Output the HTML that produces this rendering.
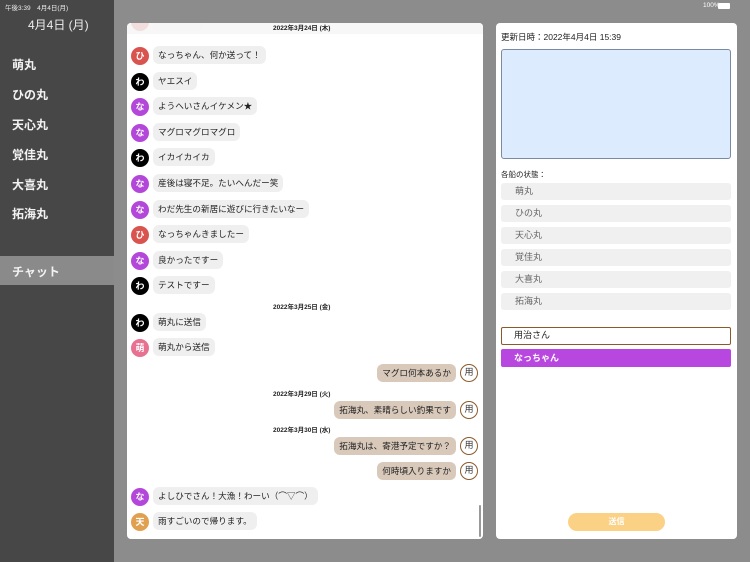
<!DOCTYPE html>
<html><head><meta charset="utf-8"><style>
*{margin:0;padding:0;box-sizing:border-box}
body{width:750px;height:562px;background:#8c8c8c;font-family:"Liberation Sans","Noto Sans CJK JP",sans-serif;position:relative;overflow:hidden}
.a{position:absolute}
.side{left:0;top:0;width:114px;height:562px;background:#474747}
.nav{left:12px;color:#f2f2f2;font-size:12px;font-weight:bold}
.chat{left:127px;top:23px;width:356px;height:516px;background:#fff;border-radius:4px;overflow:hidden}
.av{width:18px;height:18px;border-radius:50%;color:#fff;font-size:9px;font-weight:bold;text-align:center;line-height:18px}
.bl{height:18px;line-height:18px;background:#efefef;border-radius:6px;font-size:8.6px;color:#222;padding:0 5px;white-space:nowrap}
.br{background:#d9c9ba}
.ua{width:18px;height:18px;border-radius:50%;border:1.5px solid #8b5a2b;background:#fff;color:#333;font-size:9px;text-align:center;line-height:15px}
.dt{font-size:6.5px;font-weight:bold;color:#222;line-height:8px}
.right{left:496px;top:23px;width:241px;height:516px;background:#fff;border-radius:4px}
.st{left:5px;width:230px;height:17px;background:#f0f0f0;border-radius:3px;font-size:9px;color:#666;line-height:17px;padding-left:14px}
</style></head><body>
<div class="a side"></div>
<div class="a" style="left:5px;top:2px;font-size:6.5px;color:#eee">午後3:39　4月4日(月)</div>
<div class="a" style="left:28px;top:16px;font-size:12px;color:#eee">4月4日 (月)</div>
<div class="a nav" style="top:56px">萌丸</div>
<div class="a nav" style="top:86px">ひの丸</div>
<div class="a nav" style="top:116px">天心丸</div>
<div class="a nav" style="top:146px">覚佳丸</div>
<div class="a nav" style="top:176px">大喜丸</div>
<div class="a nav" style="top:205px">拓海丸</div>
<div class="a" style="left:0;top:256px;width:114px;height:29px;background:#8a8a8a"></div>
<div class="a nav" style="top:263px">チャット</div>
<div class="a" style="left:703px;top:2px;font-size:6.5px;color:#fff">100%</div>
<div class="a" style="left:718px;top:3px;width:12px;height:6px;background:#fff;border-radius:1px"></div>

<div class="a chat">
<div class="a" style="left:0;top:0;width:356px;height:11px;background:#f7f7f7"></div>
<div class="a dt" style="left:146px;top:2px">2022年3月24日 (木)</div>
<div class="a av" style="left:4px;top:-10px;background:#d9534f"></div>
<div class="a bl" style="left:26px;top:-10px;width:50px"></div>
<div class="a" style="left:0;top:0;width:356px;height:11px;background:#f7f7f7;opacity:.85"></div>
<div class="a dt" style="left:146px;top:2px">2022年3月24日 (木)</div>
<div class="a av" style="left:4px;top:24px;background:#d9534f">ひ</div><div class="a bl" style="left:26px;top:23px">なっちゃん、何か送って！</div>
<div class="a av" style="left:4px;top:50px;background:#000">わ</div><div class="a bl" style="left:26px;top:49px">ヤエスイ</div>
<div class="a av" style="left:4px;top:75px;background:#b347d9">な</div><div class="a bl" style="left:26px;top:74px">ようへいさんイケメン★</div>
<div class="a av" style="left:4px;top:101px;background:#b347d9">な</div><div class="a bl" style="left:26px;top:100px">マグロマグロマグロ</div>
<div class="a av" style="left:4px;top:126px;background:#000">わ</div><div class="a bl" style="left:26px;top:125px">イカイカイカ</div>
<div class="a av" style="left:4px;top:152px;background:#b347d9">な</div><div class="a bl" style="left:26px;top:151px">産後は寝不足。たいへんだー笑</div>
<div class="a av" style="left:4px;top:178px;background:#b347d9">な</div><div class="a bl" style="left:26px;top:177px">わだ先生の新居に遊びに行きたいなー</div>
<div class="a av" style="left:4px;top:203px;background:#d9534f">ひ</div><div class="a bl" style="left:26px;top:202px">なっちゃんきましたー</div>
<div class="a av" style="left:4px;top:229px;background:#b347d9">な</div><div class="a bl" style="left:26px;top:228px">良かったですー</div>
<div class="a av" style="left:4px;top:254px;background:#000">わ</div><div class="a bl" style="left:26px;top:253px">テストですー</div>
<div class="a dt" style="left:146px;top:281px">2022年3月25日 (金)</div>
<div class="a av" style="left:4px;top:291px;background:#000">わ</div><div class="a bl" style="left:26px;top:290px">萌丸に送信</div>
<div class="a av" style="left:4px;top:316px;background:#e87090">萌</div><div class="a bl" style="left:26px;top:315px">萌丸から送信</div>
<div class="a bl br" style="right:27px;top:341px">マグロ何本あるか</div><div class="a ua" style="right:5px;top:341px">用</div>
<div class="a dt" style="left:146px;top:368px">2022年3月29日 (火)</div>
<div class="a bl br" style="right:27px;top:378px">拓海丸、素晴らしい釣果です</div><div class="a ua" style="right:5px;top:378px">用</div>
<div class="a dt" style="left:146px;top:404px">2022年3月30日 (水)</div>
<div class="a bl br" style="right:27px;top:414px">拓海丸は、寄港予定ですか？</div><div class="a ua" style="right:5px;top:414px">用</div>
<div class="a bl br" style="right:27px;top:439px">何時頃入りますか</div><div class="a ua" style="right:5px;top:439px">用</div>
<div class="a av" style="left:4px;top:465px;background:#b347d9">な</div><div class="a bl" style="left:26px;top:464px">よしひでさん！大漁！わーい（⌒▽⌒）</div>
<div class="a av" style="left:4px;top:490px;background:#e0a050">天</div><div class="a bl" style="left:26px;top:489px">雨すごいので帰ります。</div>
<div class="a" style="left:352px;top:482px;width:2px;height:32px;background:#999;border-radius:1px"></div>
</div>

<div class="a right">
<div class="a" style="left:5px;top:8px;font-size:8.5px;color:#222">更新日時：2022年4月4日 15:39</div>
<div class="a" style="left:5px;top:26px;width:230px;height:110px;background:#dcebfd;border:1px solid #7a8aa0;border-radius:3px"></div>
<div class="a" style="left:5px;top:146px;font-size:7.5px;color:#222">各船の状態：</div>
<div class="a st" style="top:160px">萌丸</div>
<div class="a st" style="top:182px">ひの丸</div>
<div class="a st" style="top:204px">天心丸</div>
<div class="a st" style="top:226px">覚佳丸</div>
<div class="a st" style="top:248px">大喜丸</div>
<div class="a st" style="top:270px">拓海丸</div>
<div class="a" style="left:5px;top:304px;width:230px;height:18px;border:1.5px solid #8b5a2b;border-radius:2px;font-size:9px;color:#222;line-height:15px;padding-left:12px">用治さん</div>
<div class="a" style="left:5px;top:326px;width:230px;height:18px;background:#b847e0;border-radius:2px;font-size:9px;color:#fff;font-weight:bold;line-height:18px;padding-left:13px">なっちゃん</div>
<div class="a" style="left:72px;top:490px;width:97px;height:18px;background:#fbd186;border-radius:9px;font-size:8px;color:#fff;font-weight:bold;text-align:center;line-height:18px">送信</div>
</div>
</body></html>
